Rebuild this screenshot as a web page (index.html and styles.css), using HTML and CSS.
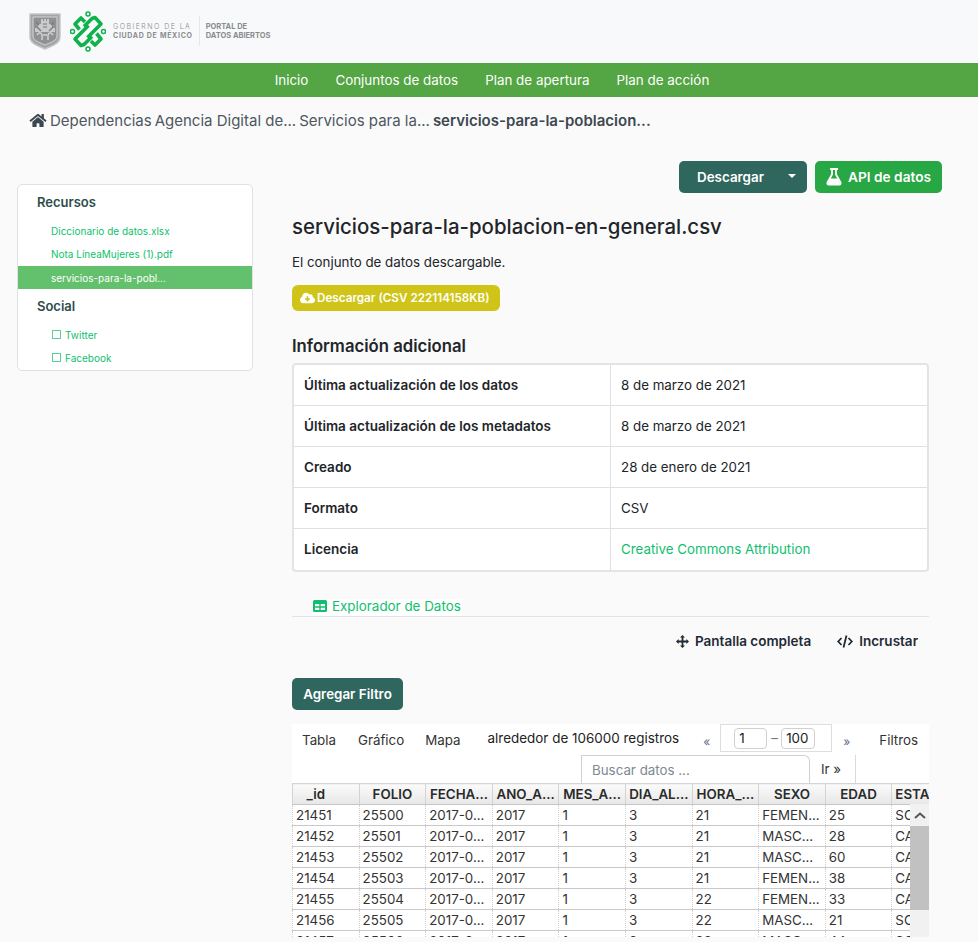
FILE: index.html
```html
<!DOCTYPE html>
<html>
<head>
  <meta charset="UTF-8">
  <title>servicios-para-la-poblacion-en-general.csv</title>
  <link rel="stylesheet" href="styles.css">
</head>
<body>
  <header class="top">
    <svg class="shield" width="32" height="37" viewBox="0 0 32 37">
      <path d="M1 1H31V24C31 31 22 33 16 36C10 33 1 31 1 24Z" fill="#a3a5a7" stroke="#c4c5c7" stroke-width="1.400"/>
      <path d="M4 4H28V23C28 28 20 30 16 32C12 30 4 28 4 23Z" fill="#8f9193" stroke="#d4d5d6"/>
      <path d="M12 8V6H14V8H15V6H17V8H18V6H20V11H23V15H26V19H6V15H9V11H12Z" fill="#c9cacb"/>
      <path d="M8 22C10 19 12 19 13 22V27M24 22C22 19 20 19 19 22V27M14 22H18" fill="none" stroke="#d2d3d4" stroke-width="1.500"/>
      <path d="M7 9L10 12M25 9L22 12M8 14L12 18M24 14L20 18M14 11H18M14 14H18" stroke="#77797b" stroke-width="1.200"/>
    </svg>
    <svg class="cdmx" width="36" height="41" viewBox="0 0 36 41">
      <g fill="none" stroke="#0fb14a" stroke-width="3.600" stroke-linejoin="round">
        <path d="M14 15.500L22 7.500L25 6.500L31 13L17.500 26.500"/>
        <path d="M22 25.500L14 33.500L11 34.500L5 28L18.500 14.500"/>
        <path d="M9.500 18.500L5 13L11 7L15 11"/>
        <path d="M26.500 22.500L31 28L25 34L21 30"/>
      </g>
      <g fill="#fff" stroke="#0fb14a" stroke-width="1.500">
        <circle cx="18" cy="3" r="2"/>
        <circle cx="18" cy="38" r="2"/>
        <circle cx="2.500" cy="20.500" r="2"/>
        <circle cx="33.500" cy="20.500" r="2"/>
      </g>
    </svg>
    <div class="brand">
      <div class="brand-light">GOBIERNO DE LA</div>
      <div class="brand-bold">CIUDAD DE MÉXICO</div>
    </div>
    <div class="portal">
      <div>PORTAL DE</div>
      <div>DATOS ABIERTOS</div>
    </div>
  </header>

  <nav class="menu">
    <a>Inicio</a>
    <a>Conjuntos de datos</a>
    <a>Plan de apertura</a>
    <a>Plan de acción</a>
  </nav>

  <div class="crumbs">
    <svg class="home" width="18" height="15" viewBox="0 0 576 512"><path fill="#3d4750" d="M280 148L96 300V464a16 16 0 0 0 16 16l112-.3a16 16 0 0 0 16-16V368a16 16 0 0 1 16-16h64a16 16 0 0 1 16 16v95.600a16 16 0 0 0 16 16.100L464 480a16 16 0 0 0 16-16V300L296 148a12 12 0 0 0-16 0zM572 251l-84-69V44a12 12 0 0 0-12-12h-56a12 12 0 0 0-12 12v72l-89-74a48 48 0 0 0-61 0L4 251a12 12 0 0 0-2 17l26 31a12 12 0 0 0 17 2L280 107a12 12 0 0 1 16 0l235 194a12 12 0 0 0 17-2l26-31a12 12 0 0 0-2-17z"/></svg>
    <span>Dependencias</span>
    <span>Agencia Digital de...</span>
    <span>Servicios para la...</span>
    <strong>servicios-para-la-poblacion...</strong>
  </div>

  <div class="page">
    <aside class="side">
      <h3>Recursos</h3>
      <a class="side-link doc">Diccionario de datos.xlsx</a>
      <a class="side-link doc">Nota LíneaMujeres (1).pdf</a>
      <a class="side-link active">servicios-para-la-pobl...</a>
      <h3>Social</h3>
      <a class="side-link"><i class="box"></i>Twitter</a>
      <a class="side-link"><i class="box"></i>Facebook</a>
    </aside>

    <main class="main">
      <div class="actions">
        <button class="btn btn-dark btn-drop">Descargar<i class="caret"></i></button>
        <button class="btn btn-green">
          <svg width="18" height="18" viewBox="0 0 18 18"><path fill="none" stroke="#fff" stroke-width="1.800" d="M5 1H13M7 1.500V6.500L2.500 14.500C2 15.800 2.700 16.500 3.700 16.500H14.300C15.300 16.500 16 15.800 15.500 14.500L11 6.500V1.500"/><path fill="#fff" d="M5.500 10.500H12.500L15.500 16H2.500Z"/></svg>
          API de datos
        </button>
      </div>

      <h1>servicios-para-la-poblacion-en-general.csv</h1>
      <p class="lead">El conjunto de datos descargable.</p>
      <a class="download">
        <svg width="15" height="12" viewBox="0 0 640 512"><path fill="#fff" d="M537.600 226.600c4.100-10.700 6.400-22.400 6.400-34.600 0-53-43-96-96-96-19.700 0-38.100 6-53.300 16.200C367 64.200 315.300 32 256 32c-88.400 0-160 71.600-160 160 0 2.700.1 5.400.2 8.100C40.200 219.800 0 273.200 0 336c0 79.500 64.500 144 144 144h368c70.700 0 128-57.300 128-128 0-61.900-44-113.600-102.400-125.400zM432 296L331 397a16 16 0 0 1-22 0L208 296c-10-10-3-27 11-27h69v-85a16 16 0 0 1 16-16h32a16 16 0 0 1 16 16v85h69c14 0 21 17 11 27z"/></svg>
        Descargar (CSV 222114158KB)
      </a>

      <h2>Información adicional</h2>
      <table class="info">
        <tr><th>Última actualización de los datos</th><td>8 de marzo de 2021</td></tr>
        <tr><th>Última actualización de los metadatos</th><td>8 de marzo de 2021</td></tr>
        <tr><th>Creado</th><td>28 de enero de 2021</td></tr>
        <tr><th>Formato</th><td>CSV</td></tr>
        <tr><th>Licencia</th><td><a class="lic">Creative Commons Attribution</a></td></tr>
      </table>

      <div class="tabs">
        <a class="tab">
          <svg width="14" height="12" viewBox="0 0 14 12"><path fill="#10bf6e" d="M1.500 0H12.500A1.500 1.500 0 0 1 14 1.500V10.500A1.500 1.500 0 0 1 12.500 12H1.500A1.500 1.500 0 0 1 0 10.500V1.500A1.500 1.500 0 0 1 1.500 0Z"/><path fill="#fff" d="M2 4H6.300V6.300H2ZM7.700 4H12V6.300H7.700ZM2 7.700H6.300V10H2ZM7.700 7.700H12V10H7.700Z"/></svg>
          Explorador de Datos
        </a>
      </div>

      <div class="tools">
        <a>
          <svg width="13" height="13" viewBox="0 0 13 13"><path fill="#1f2a36" d="M6.500 0L9 2.600H7.400V5.600H10.400V4L13 6.500L10.400 9V7.400H7.400V10.400H9L6.500 13L4 10.400H5.600V7.400H2.600V9L0 6.500L2.600 4V5.600H5.600V2.600H4Z"/></svg>
          Pantalla completa
        </a>
        <a>
          <svg width="16" height="13" viewBox="0 0 16 13"><path fill="none" stroke="#1f2a36" stroke-width="1.800" d="M4.500 3L1.200 6.500L4.500 10M11.500 3L14.800 6.500L11.500 10M9.500 .5L6.500 12.500"/></svg>
          Incrustar
        </a>
      </div>

      <button class="btn btn-dark btn-filter">Agregar Filtro</button>

      <section class="explorer">
        <div class="bar">
          <a class="view">Tabla</a>
          <a class="view">Gráfico</a>
          <a class="view">Mapa</a>
          <span class="count">alrededor de 106000 registros</span>
          <a class="arrow">«</a>
          <div class="pager"><span class="num">1</span><em>–</em><span class="num">100</span></div>
          <a class="arrow arrow-next">»</a>
          <a class="view view-filter">Filtros</a>
        </div>
        <div class="search">
          <div class="search-input">Buscar datos ...</div>
          <div class="search-go">Ir »</div>
        </div>
        <div class="grid-wrap">
          <table class="grid">
            <thead>
              <tr><th class="first">_id</th><th>FOLIO</th><th>FECHA...</th><th>ANO_A...</th><th>MES_A...</th><th>DIA_AL...</th><th>HORA_...</th><th>SEXO</th><th>EDAD</th><th class="left">ESTADO</th></tr>
            </thead>
            <tbody>
              <tr><td>21451</td><td>25500</td><td>2017-0...</td><td>2017</td><td>1</td><td>3</td><td>21</td><td>FEMEN...</td><td>25</td><td>SOLTE</td></tr>
              <tr><td>21452</td><td>25501</td><td>2017-0...</td><td>2017</td><td>1</td><td>3</td><td>21</td><td>MASC...</td><td>28</td><td>CASAD</td></tr>
              <tr><td>21453</td><td>25502</td><td>2017-0...</td><td>2017</td><td>1</td><td>3</td><td>21</td><td>MASC...</td><td>60</td><td>CASAD</td></tr>
              <tr><td>21454</td><td>25503</td><td>2017-0...</td><td>2017</td><td>1</td><td>3</td><td>21</td><td>FEMEN...</td><td>38</td><td>CASAD</td></tr>
              <tr><td>21455</td><td>25504</td><td>2017-0...</td><td>2017</td><td>1</td><td>3</td><td>22</td><td>FEMEN...</td><td>33</td><td>CASAD</td></tr>
              <tr><td>21456</td><td>25505</td><td>2017-0...</td><td>2017</td><td>1</td><td>3</td><td>22</td><td>MASC...</td><td>21</td><td>SOLTE</td></tr>
              <tr><td>21457</td><td>25506</td><td>2017-0...</td><td>2017</td><td>1</td><td>3</td><td>22</td><td>MASC...</td><td>44</td><td>SOLTE</td></tr>
            </tbody>
          </table>
          <div class="scroll">
            <div class="scroll-up"><svg width="12" height="7" viewBox="0 0 12 7"><path fill="none" stroke="#555" stroke-width="2" d="M1 6L6 1.500L11 6"/></svg></div>
            <div class="scroll-thumb"></div>
          </div>
        </div>
      </section>
    </main>
  </div>
</body>
</html>
```

FILE: styles.css
```css
* {
  box-sizing: border-box;
}

html, body {
  height: 942px;
  overflow: hidden;
}

body {
  font-family: Inter, "Noto Sans", sans-serif;
  background-color: #fafafa;
  color: #212529;
  margin: 0;
  padding: 0;
}

.top {
  height: 63px;
  background-color: #f8f9fb;
  display: flex;
  align-items: center;
  padding: 0 0 1px 29px;
}

.cdmx {
  margin-left: 9px;
}

.brand {
  margin-left: 7px;
  padding-right: 6px;
  font-size: 7px;
  line-height: 9px;
  color: #8a8c8e;
  height: 30px;
  display: flex;
  flex-direction: column;
  justify-content: center;
  border-right: 1px solid #e6e7e9;
}

.brand-light {
  letter-spacing: 1.45px;
  font-weight: 300;
}

.brand-bold {
  font-weight: 700;
  letter-spacing: .7px;
}

.portal {
  margin-left: 6px;
  font-size: 7.500px;
  line-height: 9px;
  font-weight: 700;
  color: #8a8c8e;
}

.menu {
  height: 34px;
  background-color: #54a543;
  display: flex;
  justify-content: center;
  align-items: center;
  gap: 27px;
  font-size: 13.400px;
  padding-left: 6px;
  color: #fff;
}

.crumbs {
  height: 47px;
  display: flex;
  align-items: center;
  padding-left: 29px;
  font-size: 15px;
  color: #4e5761;
  gap: 3px;
}

.crumbs strong {
  font-weight: 600;
  font-size: 15px;
  color: #3d4750;
}

.page {
  display: flex;
  align-items: flex-start;
  padding: 17px 0 0 17px;
}

.side {
  width: 236px;
  margin-top: 23px;
  background-color: #fff;
  border: 1px solid #e0e1e6;
  border-radius: 5px;
  padding: 1px 0 1px;
}

.side h3 {
  margin: 0;
  padding: 8px 0 7px 19px;
  font-size: 13px;
  line-height: 19px;
  font-weight: 600;
  color: #2e4d4b;
}

.side h3:first-child {
  padding-top: 7px;
  padding-bottom: 8px;
}

.side-link {
  display: flex;
  align-items: center;
  height: 23px;
  padding-left: 33px;
  font-size: 10px;
  color: #10bf6e;
}

.side-link.doc {
  padding-bottom: 1px;
}

.side-link.active {
  background-color: #63c06c;
  color: #fff;
}

.box {
  width: 9px;
  height: 9px;
  border: 1px solid #5bd09a;
  margin: 0 4px 0 1px;
}

.main {
  width: 637px;
  margin-left: 39px;
  position: relative;
}

.actions {
  display: flex;
  justify-content: flex-end;
  gap: 8px;
  margin-right: -13px;
}

.btn {
  font-family: inherit;
  border: 0;
  border-radius: 5px;
  color: #fff;
  font-size: 13.400px;
  font-weight: 600;
  height: 32px;
  display: flex;
  align-items: center;
}

.btn-dark {
  background-color: #2f665d;
}

.btn-drop {
  width: 128px;
  padding-left: 18px;
  position: relative;
}

.caret {
  position: absolute;
  right: 11px;
  top: 13px;
  border: 4px solid transparent;
  border-top-color: #fff;
  border-bottom: 0;
}

.btn-green {
  width: 127px;
  padding-left: 10px;
  gap: 5px;
  font-size: 13.700px;
  background-color: #28a745;
}

h1 {
  margin: 21px 0 0;
  font-size: 20.400px;
  line-height: 26px;
  font-weight: 500;
  color: #212529;
}

.lead {
  margin: 13px 0 0;
  font-size: 13.330px;
  line-height: 18px;
}

.download {
  display: inline-flex;
  align-items: center;
  gap: 2px;
  margin-top: 14px;
  height: 26px;
  width: 208px;
  padding-left: 8px;
  border-radius: 6px;
  background-color: #cfc417;
  color: #fff;
  font-size: 11.700px;
  font-weight: 600;
}

h2 {
  margin: 23px 0 0;
  font-size: 16.700px;
  line-height: 24px;
  font-weight: 600;
}

.info {
  width: 637px;
  margin-top: 5px;
  background-color: #fff;
  border-collapse: separate;
  border-spacing: 0;
  border: 2px solid #e3e4e8;
  border-radius: 4px;
  font-size: 13.330px;
  table-layout: fixed;
}

.info th, .info td {
  height: 41px;
  padding: 0 10px;
  text-align: left;
  border-bottom: 1px solid #dfe0e3;
}

.info th {
  width: 317px;
  font-weight: 600;
  font-size: 13.500px;
  border-right: 1px solid #dfe0e3;
}

.info tr:last-child th, .info tr:last-child td {
  border-bottom: 0;
  padding-bottom: 1px;
}

.lic {
  color: #10bf6e;
}

.tabs {
  margin-top: 27px;
  height: 18px;
  border-bottom: 1px solid #e2e3e5;
}

.tab {
  display: flex;
  align-items: center;
  gap: 5px;
  margin-left: 20px;
  padding: 0 0 4px 1px;
  width: 150px;
  height: 17px;
  font-size: 13.400px;
  color: #10bf6e;
  background-color: #fff;
}

.tools {
  display: flex;
  justify-content: flex-end;
  gap: 26px;
  padding-right: 11px;
  height: 48px;
  align-items: center;
  font-size: 13.500px;
  font-weight: 600;
  color: #1f2a36;
}

.tools a {
  display: flex;
  align-items: center;
  gap: 6px;
}

.btn-filter {
  width: 111px;
  justify-content: center;
  margin-top: 13px;
}

.explorer {
  margin-top: 14px;
  background-color: #fff;
  font-size: 13.330px;
}

.bar {
  display: flex;
  align-items: flex-start;
  height: 31px;
  position: relative;
}

.view {
  margin-left: 11px;
  margin-right: 10px;
  line-height: 33px;
  color: #333;
}

.view:first-child {
  margin-left: 10px;
  margin-right: 11px;
}

.view-filter {
  margin-left: auto;
  margin-right: 11px;
}

.count {
  margin-left: 17px;
  font-size: 13.450px;
  line-height: 29px;
  color: #222;
}

.arrow {
  margin-left: 24px;
  line-height: 35px;
  font-size: 12px;
  color: #5d6d8c;
}

.arrow-next {
  margin-left: 11px;
}

.pager {
  margin-left: 10px;
  width: 112px;
  height: 28px;
  border: 1px solid #dcdde0;
  display: flex;
  align-items: center;
  padding-left: 13px;
  gap: 4px;
}

.pager em {
  width: 6px;
  font-style: normal;
  text-align: center;
  color: #777;
}

.num {
  width: 33px;
  height: 21px;
  line-height: 19px;
  padding-left: 4px;
  border: 1px solid #cfd0d3;
  border-radius: 4px;
  color: #222;
}

.num:last-child {
  width: 34px;
}

.search {
  display: flex;
  justify-content: flex-end;
  height: 28px;
  padding-right: 73px;
}

.search-input {
  width: 229px;
  border: 1px solid #cfd0d3;
  border-bottom: 0;
  border-radius: 0 6px 0 0;
  padding: 0 10px;
  line-height: 28px;
  color: #808890;
  background-color: #fff;
}

.search-go {
  width: 46px;
  line-height: 28px;
  padding-left: 11px;
  border-right: 1px solid #d8d9dc;
  color: #333;
}

.grid-wrap {
  position: relative;
  height: 154px;
  overflow: hidden;
}

.grid {
  table-layout: fixed;
  width: 667px;
  border-collapse: collapse;
  font-size: 13.330px;
  color: #333;
}

.grid th {
  height: 21px;
  padding: 0;
  font-weight: 600;
  text-align: center;
  overflow: hidden;
  white-space: nowrap;
  color: #2a2a2a;
  background: linear-gradient(#fbfbfb, #e7e7e7);
  border: 1px solid #d4d4d4;
  border-bottom-color: #c6c6c6;
}

.grid th.first {
  padding-right: 20px;
}

.grid th.left {
  text-align: left;
  padding-left: 3px;
}

.grid td {
  height: 21px;
  padding: 0 0 0 3px;
  overflow: hidden;
  white-space: nowrap;
  border-bottom: 1px solid #c9c9c9;
  border-left: 1px dotted #d0d0d0;
}

.scroll {
  position: absolute;
  right: 0;
  top: 21px;
  bottom: 0;
  width: 19px;
  background-color: #f1f1f1;
}

.scroll-up {
  height: 22px;
  display: flex;
  align-items: center;
  justify-content: center;
}

.scroll-thumb {
  height: 84px;
  background-color: #c1c1c1;
}
```
